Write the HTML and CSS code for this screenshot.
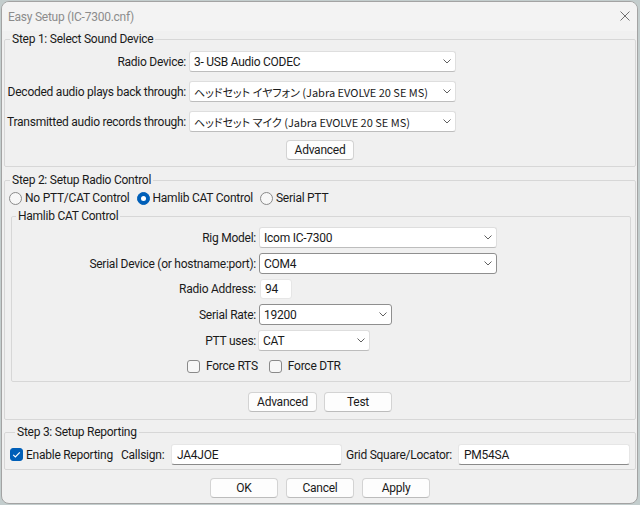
FILE: index.html
```html
<!DOCTYPE html>
<html lang="ja">
<head>
  <meta charset="UTF-8" />
  <title>Easy Setup (IC-7300.cnf)</title>
  <link rel="stylesheet" href="styles.css">
</head>
<body>

  <div class="window">
    <div class="titlebar">
      <span class="title">Easy Setup (IC-7300.cnf)</span>
      <svg class="close" width="10" height="10" viewBox="0 0 10 10"><path d="M0.5 0.5 L9.5 9.5 M9.5 0.5 L0.5 9.5" /></svg>
    </div>

    <div class="content">
      <fieldset class="group step1">
        <legend>Step 1: Select Sound Device</legend>
        <div class="form sound">
          <span class="lbl">Radio Device:</span>
          <div class="combo"><span>3- USB Audio CODEC</span><svg class="chev" width="8" height="5" viewBox="0 0 8 5"><polyline points="0.5,0.5 4,4 7.5,0.5" /></svg></div>
          <span class="lbl">Decoded audio plays back through:</span>
          <div class="combo"><span class="ja">ヘッドセット イヤフォン (Jabra EVOLVE 20 SE MS)</span><svg class="chev" width="8" height="5" viewBox="0 0 8 5"><polyline points="0.5,0.5 4,4 7.5,0.5" /></svg></div>
          <span class="lbl">Transmitted audio records through:</span>
          <div class="combo"><span class="ja">ヘッドセット マイク (Jabra EVOLVE 20 SE MS)</span><svg class="chev" width="8" height="5" viewBox="0 0 8 5"><polyline points="0.5,0.5 4,4 7.5,0.5" /></svg></div>
        </div>
        <div class="btnrow"><button class="btn">Advanced</button></div>
      </fieldset>

      <fieldset class="group step2">
        <legend>Step 2: Setup Radio Control</legend>
        <div class="radios">
          <label class="opt"><span class="radio"></span>No PTT/CAT Control</label>
          <label class="opt"><span class="radio on"></span>Hamlib CAT Control</label>
          <label class="opt"><span class="radio"></span>Serial PTT</label>
        </div>

        <fieldset class="group hamlib">
          <legend>Hamlib CAT Control</legend>
          <div class="form rig">
            <span class="lbl">Rig Model:</span>
            <div class="combo w-rig"><span>Icom IC-7300</span><svg class="chev" width="8" height="5" viewBox="0 0 8 5"><polyline points="0.5,0.5 4,4 7.5,0.5" /></svg></div>
            <span class="lbl">Serial Device (or hostname:port):</span>
            <div class="combo edit w-rig"><span>COM4</span><svg class="chev" width="8" height="5" viewBox="0 0 8 5"><polyline points="0.5,0.5 4,4 7.5,0.5" /></svg></div>
            <span class="lbl">Radio Address:</span>
            <div class="field w-addr">94</div>
            <span class="lbl">Serial Rate:</span>
            <div class="combo edit w-rate"><span>19200</span><svg class="chev" width="8" height="5" viewBox="0 0 8 5"><polyline points="0.5,0.5 4,4 7.5,0.5" /></svg></div>
            <span class="lbl">PTT uses:</span>
            <div class="combo w-ptt"><span>CAT</span><svg class="chev" width="8" height="5" viewBox="0 0 8 5"><polyline points="0.5,0.5 4,4 7.5,0.5" /></svg></div>
          </div>
          <div class="checks">
            <label class="opt"><span class="check"></span>Force RTS</label>
            <label class="opt"><span class="check"></span>Force DTR</label>
          </div>
        </fieldset>

        <div class="btnrow">
          <button class="btn w69">Advanced</button>
          <button class="btn">Test</button>
        </div>
      </fieldset>

      <fieldset class="group step3">
        <legend>Step 3: Setup Reporting</legend>
        <div class="report">
          <label class="opt"><span class="check on"><svg width="13" height="13" viewBox="0 0 13 13"><polyline points="3.2,6.8 5.4,9 9.8,4.4" /></svg></span>Enable Reporting</label>
          <span class="lbl-left">Callsign:</span>
          <div class="field line">JA4JOE</div>
          <span class="lbl-left grid-lbl">Grid Square/Locator:</span>
          <div class="field line">PM54SA</div>
        </div>
      </fieldset>

      <div class="btnrow bottom">
        <button class="btn">OK</button>
        <button class="btn">Cancel</button>
        <button class="btn">Apply</button>
      </div>
    </div>
  </div>

</body>
</html>
```

FILE: styles.css
```css
* {
  box-sizing: border-box;
}

body {
  margin: 0;
  background-color: #c3cdcd;
  color: #1a1a1a;
  font-family: Roboto, "Noto Sans CJK JP", sans-serif;
  font-size: 12px;
  letter-spacing: -0.25px;
}

.ja {
  font-family: "Noto Sans CJK JP", sans-serif;
  font-feature-settings: "palt";
  font-size: 11px;
  letter-spacing: 0;
}

.window {
  width: 637px;
  height: 503px;
  margin: 1px 0 0 1px;
  border: 1px solid #a3a3a3;
  border-radius: 8px;
  background-color: #f0f0f0;
  overflow: hidden;
  display: flex;
  flex-direction: column;
}

.titlebar {
  height: 29px;
  flex: none;
  display: flex;
  align-items: center;
  justify-content: space-between;
  padding: 0 7px 0 6px;
  background-color: #f3f3f3;
  color: #8c8c8c;
}

.close {
  margin-top: -2px;
}

.close path {
  stroke: #707070;
  stroke-width: 1;
  fill: none;
}

.content {
  padding: 0 1px 0 2px;
}

fieldset.group {
  margin: 0;
  padding: 0;
  min-width: 0;
  border: 1px solid #d7d7d7;
  border-radius: 2px;
}

fieldset.group legend {
  margin-left: 5px;
  padding: 0 2px;
  line-height: 16px;
}

.step1 {
  padding: 4px 0 6px 0 !important;
}

.step2 {
  margin-top: 5px !important;
  padding: 2px 0 7px 0 !important;
}

.step3 {
  margin-top: 4px !important;
  padding: 4px 0 4px 5px !important;
}

.form {
  display: grid;
  column-gap: 3px;
  align-items: center;
}

.sound {
  grid-template-columns: 181px 267px;
  row-gap: 9px;
  grid-auto-rows: 21px;
}

.rig {
  grid-template-columns: 244px auto;
  grid-template-rows: 21px 21px 20px 21px 21px;
  row-gap: 5px;
  justify-items: start;
}

.lbl {
  justify-self: end;
  white-space: nowrap;
}

.lbl-left {
  white-space: nowrap;
}

.combo {
  height: 21px;
  display: flex;
  align-items: center;
  justify-content: space-between;
  padding: 0 4px 0 4px;
  background-color: #fff;
  border: 1px solid #dedede;
  border-bottom-color: #bdbdbd;
  border-radius: 3px;
  white-space: nowrap;
  overflow: hidden;
}

.combo.edit {
  border-color: #8f8f8f;
}

.chev {
  flex: none;
}

.chev polyline {
  fill: none;
  stroke: #606060;
  stroke-width: 1;
}

.w-rig { width: 238px; }
.w-rate { width: 133px; }
.w-ptt { width: 112px; margin-left: -1px; }

.field {
  height: 21px;
  display: flex;
  align-items: center;
  padding-left: 4px;
  background-color: #fff;
  border: 1px solid #e6e6e6;
  border-radius: 3px;
}

.field.line {
  border-bottom-color: #8a8a8a;
}

.w-addr {
  width: 32px;
  height: 20px;
  margin-left: 1px;
}

.btnrow {
  display: flex;
  justify-content: center;
  gap: 7px;
  margin-top: 8px;
}

.step2 > .btnrow {
  margin-top: 10px;
}

.btn {
  width: 68px;
  height: 20px;
  padding: 0;
  font: inherit;
  letter-spacing: inherit;
  color: #1a1a1a;
  background-color: #fdfdfd;
  border: 1px solid #d3d3d3;
  border-bottom-color: #bcbcbc;
  border-radius: 4px;
}

.btn.w69 {
  width: 69px;
}

.bottom {
  margin-top: 8px;
  gap: 8px;
}

.radios {
  display: flex;
  gap: 7px;
  height: 16px;
  padding-left: 4px;
  align-items: center;
}

.opt {
  display: flex;
  align-items: center;
  gap: 3px;
  white-space: nowrap;
}

.radio {
  width: 13px;
  height: 13px;
  border-radius: 50%;
  border: 1px solid #8a8a8a;
  background-color: #f7f7f7;
  display: flex;
  align-items: center;
  justify-content: center;
}

.radio.on {
  border-color: #005fb8;
  background-color: #005fb8;
}

.radio.on::after {
  content: "";
  width: 5px;
  height: 5px;
  border-radius: 50%;
  background-color: #fff;
}

.hamlib {
  margin: 2px 4px 0 6px !important;
  padding: 3px 0 7px 0 !important;
}

.hamlib legend {
  margin-left: 4px !important;
}

.checks {
  display: flex;
  gap: 11px;
  height: 16px;
  margin-top: 7px;
  padding-left: 175px;
  align-items: center;
}

.check {
  width: 13px;
  height: 13px;
  border-radius: 3px;
  border: 1px solid #8a8a8a;
  background-color: #f7f7f7;
  margin-right: 3px;
  display: flex;
}

.check.on {
  border-color: #005fb8;
  background-color: #005fb8;
  margin-right: 0;
}

.check svg {
  margin: -1px;
}

.check polyline {
  fill: none;
  stroke: #fff;
  stroke-width: 1.2;
}

.report {
  display: grid;
  grid-template-columns: 111px 50px 171px 116px 172px;
  height: 21px;
  align-items: center;
}

.grid-lbl {
  padding-left: 4px;
}

.report .field {
  padding-left: 5px;
}
```
